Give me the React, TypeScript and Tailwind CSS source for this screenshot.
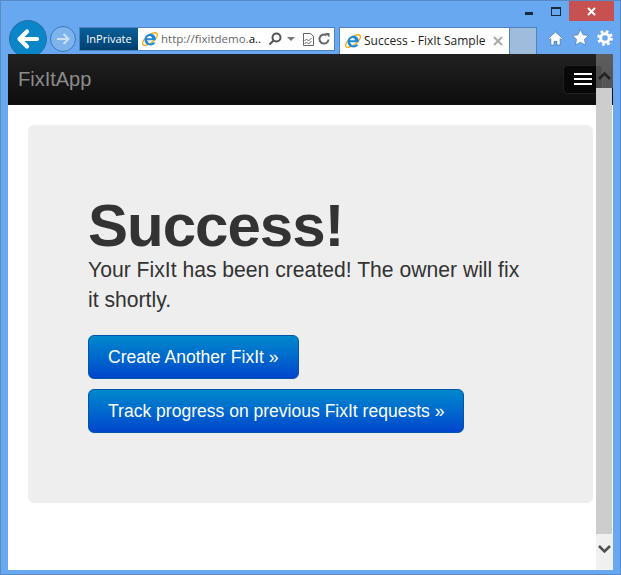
import React from "react";

const IeLogo = () => (
  <svg width="18" height="18" viewBox="0 0 18 18" className="shrink-0">
    <ellipse cx="9" cy="9" rx="9" ry="3.800" fill="none" stroke="#f2b01e" strokeWidth="1.400" transform="rotate(-38 9 9)" />
    <path d="M5.800 10.300h8.900c.4-3.900-1.800-6.500-5.200-6.500-3.300 0-5.900 2.500-5.900 6 0 3.400 2.500 5.700 5.800 5.700 2.300 0 4.200-1 5-3h-3c-.5.7-1.100 1-2 1-1.400 0-2.500-1.100-2.600-2.200zm.1-2c.2-1.200 1.300-2.200 2.700-2.200 1.300 0 2.300 1 2.400 2.200H5.900z" fill="#1f8ad8" fillRule="evenodd" />
  </svg>
);

const App = () => (
  <div className="flex h-[575px] w-[621px] flex-col overflow-hidden border border-[#5a8ac6] bg-[#68a8f0] font-['Liberation_Sans',sans-serif]">
    <div className="relative flex h-[53px] shrink-0 items-end">
      <div className="absolute left-[8px] top-[19px] flex h-[38px] w-[38px] items-center justify-center rounded-full border border-[#2a6ea8] bg-[#0a86c8]">
        <svg width="24" height="24" viewBox="0 0 24 24" fill="none" stroke="white" strokeWidth="4.200" strokeLinecap="round" strokeLinejoin="round"><path d="M21 12H4M11 4.500 3.500 12l7.500 7.500" /></svg>
      </div>
      <div className="ml-[49px] mb-[2px] flex h-[26px] w-[26px] items-center justify-center rounded-full border border-[#3f78b8] bg-[#7eb4ee]">
        <svg width="18" height="18" viewBox="0 0 18 18" fill="none" stroke="#cfe0f5" strokeWidth="2" strokeLinejoin="round"><path d="M3 9h11M9.500 4 14.500 9 9.500 14" /></svg>
      </div>
      <div className="ml-[3px] mb-[3px] flex h-[24px] w-[256px] items-center border border-[#4e83bd] bg-white">
        <div className="flex h-full w-[58px] items-center justify-center bg-gradient-to-b from-[#0a6199] to-[#003f70] text-[11px] text-white font-['Open_Sans',sans-serif]">InPrivate</div>
        <div className="ml-[3px]"><IeLogo /></div>
        <span className="ml-[2px] w-[104px] truncate text-[11.500px] text-[#666] font-['Open_Sans',sans-serif]">http://fixitdemo.<span className="text-black">a..</span></span>
        <svg className="ml-[3px]" width="14" height="14" viewBox="0 0 14 14" fill="none" stroke="#555" strokeWidth="2"><circle cx="8.500" cy="5.500" r="4" /><path d="M5.500 8.500 1.500 12.500" /></svg>
        <svg className="ml-[5px]" width="8" height="5" viewBox="0 0 8 5"><path d="M0 0h8L4 4z" fill="#777" /></svg>
        <svg className="ml-[8px]" width="11" height="13" viewBox="0 0 11 13" fill="none" stroke="#666"><path d="M.5.500h7l3 3v9H.500z" /><path d="M1.500 8l2-2 2 2 3-3M1.500 11l2-2 2 2 3-3" /></svg>
        <svg className="ml-[4px]" width="12" height="12" viewBox="0 0 12 12" fill="none" stroke="#666" strokeWidth="2"><path d="M10.500 6.500A4.500 4.500 0 1 1 8.500 2.300" /><path d="M7 0h4.500v4.500z" fill="#666" stroke="none" /></svg>
      </div>
      <div className="ml-[4px] flex h-[27px] w-[171px] items-center border-x border-t border-[#4e83bd] bg-white pl-[4px]">
        <IeLogo />
        <span className="ml-[2px] text-[12px] text-[#222] font-['Open_Sans',sans-serif]">Success - FixIt Sample</span>
        <svg className="ml-auto mr-[6px]" width="10" height="10" viewBox="0 0 10 10" stroke="#aaa" strokeWidth="2"><path d="M1 1l8 8M9 1l-8 8" /></svg>
      </div>
      <div className="h-[27px] w-[27px] border-r border-t border-[#4e83bd] bg-[#a0bcdc]" />
      <svg className="ml-[11px] mb-[8px]" width="15" height="15" viewBox="0 0 16 16" fill="white" stroke="#3d6ea5" strokeWidth="0.700"><path d="M8 1 .5 8l1.200 1.200L3 8v7h3.500v-4h3v4H13V8l1.300 1.200L15.500 8z" /></svg>
      <svg className="ml-[9px] mb-[8px]" width="17" height="17" viewBox="0 0 17 17" fill="white" stroke="#3d6ea5" strokeWidth="0.600"><path d="M8.500.500l2.500 5.300 5.600.700-4.200 3.800 1.200 5.800-5.100-2.900-5.100 2.900 1.200-5.800L.400 6.500l5.600-.700z" /></svg>
      <svg className="ml-[8px] mb-[8px]" width="16" height="16" viewBox="0 0 16 16" fill="none" stroke="white"><circle cx="8" cy="8" r="4.300" strokeWidth="3" /><circle cx="8" cy="8" r="6.400" strokeWidth="3" strokeDasharray="2.600 2.427" /></svg>
      <div className="absolute right-[6px] top-0 flex items-start">
        <div className="mt-[11px] h-[3px] w-[8px] bg-[#1a2a3a]" />
        <div className="ml-[18px] mt-[6px] h-[9px] w-[10px] border border-t-[2px] border-[#1a2a3a]" />
        <div className="ml-[8px] flex h-[20px] w-[45px] items-center justify-center bg-[#c75050]">
          <svg width="9" height="9" viewBox="0 0 9 9" stroke="white" strokeWidth="2"><path d="M1 1l7 7M8 1l-7 7" /></svg>
        </div>
      </div>
    </div>
    <div className="relative ml-[7px] mr-[7px] h-[516px] shrink-0 bg-white">
      <nav className="flex h-[51px] items-center justify-between border-b border-[#111] bg-gradient-to-b from-[#222222] to-[#0d0d0d] pl-[10px] pr-[10px]">
        <span className="text-[20px] text-[#8c8c8c]">FixItApp</span>
        <div className="flex h-[29px] w-[40px] flex-col items-center justify-center gap-[3px] rounded-[4px] border border-[#222] bg-[#080808]">
          <span className="h-[2px] w-[18px] shrink-0 bg-white" />
          <span className="h-[2px] w-[18px] shrink-0 bg-white" />
          <span className="h-[2px] w-[18px] shrink-0 bg-white" />
        </div>
      </nav>
      <main className="ml-[20px] mr-[20px] mt-[20px] h-[378px] rounded-[6px] bg-[#eeeeee] pl-[60px] pr-[70px] pt-[71px]">
        <h1 className="text-[60px] font-bold leading-[59px] tracking-[-1px] text-[#333]">Success!</h1>
        <p className="text-[21.150px] leading-[30px] text-[#333]">Your FixIt has been created! The owner will fix it shortly.</p>
        <div className="mt-[20px] flex flex-col items-start gap-[10px]">
          <button className="h-[44px] rounded-[6px] border border-[#0055aa] bg-gradient-to-b from-[#0088cc] to-[#0044cc] px-[19px] text-[17.550px] text-white">Create Another FixIt »</button>
          <button className="h-[44px] rounded-[6px] border border-[#0055aa] bg-gradient-to-b from-[#0088cc] to-[#0044cc] px-[19px] text-[17.550px] text-white">Track progress on previous FixIt requests »</button>
        </div>
      </main>
      <div className="absolute bottom-0 right-0 top-0 flex w-[17px] flex-col">
        <div className="flex h-[34px] justify-center bg-[#cdcdcd]/35 pt-[17px]">
          <svg width="13" height="9" viewBox="0 0 13 9" fill="none" stroke="#222" strokeWidth="2.500"><path d="M1 8l5.500-5.500L12 8" /></svg>
        </div>
        <div className="h-[446px] w-[16px] bg-[#cdcdcd]" />
        <div className="flex flex-1 justify-center bg-[#f0f0f0] pt-[11px]">
          <svg width="13" height="9" viewBox="0 0 13 9" fill="none" stroke="#505050" strokeWidth="2.500"><path d="M1 1l5.500 5.500L12 1" /></svg>
        </div>
      </div>
    </div>
  </div>
);

export default App;
